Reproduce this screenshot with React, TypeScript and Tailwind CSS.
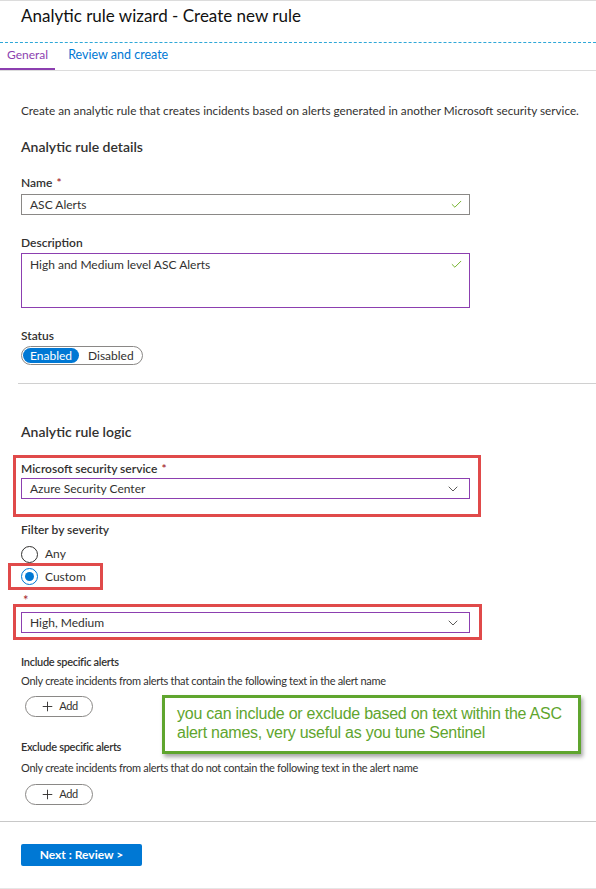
import { Check, ChevronDown, Plus } from 'lucide-react'

function Label({ children, required }: { children: React.ReactNode; required?: boolean }) {
  return (
    <div className="text-[12px] font-semibold leading-4 text-[#323130]">
      {children}
      {required && <span className="ml-1 text-[#a4262c]">*</span>}
    </div>
  )
}

function Select({ value }: { value: string }) {
  return (
    <div className="flex h-[21px] w-[449px] items-center justify-between border border-[#8c3fb0] pl-2 pr-2 text-[12px] text-[#323130]">
      <span>{value}</span>
      <ChevronDown size={16} strokeWidth={1.2} className="text-[#323130]" />
    </div>
  )
}

function AddButton() {
  return (
    <button className="flex h-[21px] w-[68px] items-center justify-center gap-1 rounded-full border border-[#8a8886] text-[11px] tracking-[-0.3px] text-[#323130]">
      <Plus size={15} strokeWidth={1.5} />
      Add
    </button>
  )
}

export default function App() {
  return (
    <div className="relative h-[889px] w-[596px] overflow-hidden bg-white font-['Segoe_UI',Lato,sans-serif] text-[#323130]">
      <div className="border-t border-[#dcdcdc]" />
      <h1 className="pl-[21px] pt-[3px] text-[17px] leading-[24px] text-[#111]">
        Analytic rule wizard - Create new rule
      </h1>
      <div className="mt-[14px] border-t border-dashed border-[#2ea8d8]" />
      <div className="flex border-b border-[#dcdcdc] pt-[3px] text-[12px]">
        <div className="border-b-2 border-[#8c3fb0] px-[7px] pb-[4px] text-[#8c3fb0]">General</div>
        <div className="pb-[4px] pl-[13px] text-[12.5px] text-[#0078d4]">Review and create</div>
      </div>

      <div className="pl-[21px]">
        <p className="mt-[32px] whitespace-nowrap text-[11.75px] leading-4">
          Create an analytic rule that creates incidents based on alerts generated in another Microsoft security service.
        </p>
        <h2 className="mt-[18px] text-[14px] font-semibold leading-5">Analytic rule details</h2>

        <div className="mt-[18px]">
          <Label required>Name</Label>
          <div className="mt-[3px] flex h-[21px] w-[449px] items-center justify-between border border-[#8a8886] pl-2 pr-[6px] text-[12px]">
            <span>ASC Alerts</span>
            <Check size={13} strokeWidth={1.5} className="text-[#57a300]" />
          </div>
        </div>

        <div className="mt-[20px]">
          <Label>Description</Label>
          <div className="mt-[2px] flex h-[55px] w-[449px] items-start justify-between border border-[#8c3fb0] pl-2 pr-[6px] pt-[2px] text-[12px]">
            <span>High and Medium level ASC Alerts</span>
            <Check size={13} strokeWidth={1.5} className="mt-[2px] text-[#57a300]" />
          </div>
        </div>

        <div className="mt-[20px]">
          <Label>Status</Label>
          <div className="mt-[2px] flex h-[19px] w-[122px] items-center rounded-full border border-[#8a8886] p-[1px] text-[12px]">
            <span className="flex h-full w-[56px] items-center justify-center rounded-full bg-[#0078d4] text-white">Enabled</span>
            <span className="pl-[9px]">Disabled</span>
          </div>
        </div>
      </div>

      <div className="ml-[18px] mt-[18px] border-t border-[#d0d0d0]" />

      <div className="pl-[21px]">
        <h2 className="mt-[38px] text-[14px] font-semibold leading-5">Analytic rule logic</h2>
      </div>

      <div className="ml-[13px] mt-[13px] w-[468px] border-[3px] border-[#e04a4a] pb-[15px] pl-[5px] pt-[3px]">
        <Label required>Microsoft security service</Label>
        <div className="mt-[1px]">
          <Select value="Azure Security Center" />
        </div>
      </div>

      <div className="pl-[21px] pt-[5px]">
        <Label>Filter by severity</Label>
        <div className="mt-[7px] flex items-center gap-[7px] text-[12px]">
          <span className="h-[17px] w-[17px] rounded-full border border-[#323130]" />
          Any
        </div>
      </div>
      <div className="ml-[8px] flex h-[27px] w-[95px] items-center gap-[7px] border-[3px] border-[#e04a4a] pl-[10px] text-[12px]">
        <span className="flex h-[17px] w-[17px] items-center justify-center rounded-full border border-[#0078d4]">
          <span className="h-[9px] w-[9px] rounded-full bg-[#0078d4]" />
        </span>
        Custom
      </div>
      <div className="h-[14px] pl-[23px] pt-[5px] text-[13px] leading-[10px] text-[#a4262c]">*</div>
      <div className="ml-[13px] w-[469px] border-[3px] border-[#e04a4a] pb-[4px] pl-[5px] pt-[5px]">
        <Select value="High, Medium" />
      </div>

      <div className="pl-[21px] pt-[14px] text-[11px] tracking-[-0.3px]">
        <div className="font-semibold leading-4">Include specific alerts</div>
        <p className="mt-[3px] leading-4">
          Only create incidents from alerts that contain the following text in the alert name
        </p>
        <div className="ml-[4px] mt-[7px]">
          <AddButton />
        </div>

        <div className="mt-[22px]">
          <div className="font-semibold leading-4">Exclude specific alerts</div>
          <p className="mt-[5px] leading-4">
            Only create incidents from alerts that do not contain the following text in the alert name
          </p>
          <div className="ml-[4px] mt-[8px]">
            <AddButton />
          </div>
        </div>
      </div>

      <div className="mt-[16px] border-t border-[#c8c8c8]" />
      <div className="pl-[21px] pt-[22px]">
        <button className="block h-[22px] w-[121px] rounded-[2px] bg-[#0078d4] text-[12px] font-bold text-white">
          Next : Review &gt;
        </button>
      </div>
      <div className="absolute bottom-0 left-0 w-full border-t border-[#e6e6e6]" />

      <div className="absolute left-[162px] top-[695px] h-[59px] w-[419px] border-[3px] border-[#5fa52e] bg-white pl-[12px] pt-[6px] font-['Liberation_Sans',sans-serif] text-[16px] leading-[19px] tracking-[-0.25px] text-[#5fa52e] shadow-[2px_3px_4px_rgba(0,0,0,0.35)]">
        you can include or exclude based on text within the ASC alert names, very useful as you tune Sentinel
      </div>
    </div>
  )
}
